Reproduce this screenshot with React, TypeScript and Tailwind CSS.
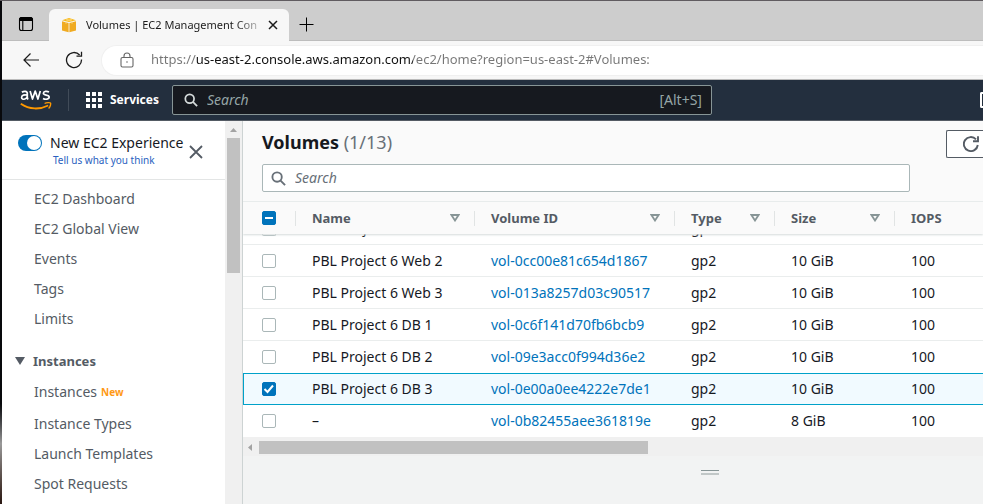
import React from "react";

type Volume = {
  name: string;
  id: string;
  type: string;
  size: string;
  iops: string;
  selected?: boolean;
};

const volumes: Volume[] = [
  { name: "PBL Project 6 Web 2", id: "vol-0cc00e81c654d1867", type: "gp2", size: "10 GiB", iops: "100" },
  { name: "PBL Project 6 Web 3", id: "vol-013a8257d03c90517", type: "gp2", size: "10 GiB", iops: "100" },
  { name: "PBL Project 6 DB 1", id: "vol-0c6f141d70fb6bcb9", type: "gp2", size: "10 GiB", iops: "100" },
  { name: "PBL Project 6 DB 2", id: "vol-09e3acc0f994d36e2", type: "gp2", size: "10 GiB", iops: "100" },
  { name: "PBL Project 6 DB 3", id: "vol-0e00a0ee4222e7de1", type: "gp2", size: "10 GiB", iops: "100", selected: true },
  { name: "–", id: "vol-0b82455aee361819e", type: "gp2", size: "8 GiB", iops: "100" },
];

function SearchIcon({ className }: { className: string }) {
  return (
    <svg viewBox="0 0 16 16" className={className} fill="none" stroke="currentColor" strokeWidth="2" aria-hidden="true">
      <circle cx="6.5" cy="6.5" r="5" />
      <path d="M10.2 10.2 15 15" />
    </svg>
  );
}

function BrowserTabs() {
  return (
    <div className="flex h-10 items-end border-b border-[#bdbdbd] bg-[#cdcdcd]">
      <button type="button" aria-label="Tab actions" className="flex h-8 w-[47px] items-center justify-center text-black">
        <svg viewBox="0 0 16 16" className="size-4" fill="none" stroke="currentColor" aria-hidden="true">
          <rect x="1.5" y="1.5" width="13" height="13" rx="2" strokeWidth="1.1" />
          <path d="M1.5 3.500a2 2 0 0 1 2-2h9a2 2 0 0 1 2 2v1h-13z" fill="currentColor" />
          <path d="M4.800 5v9.5" strokeWidth="1.1" />
        </svg>
      </button>
      <div className="-mb-px flex h-8 w-60 items-center rounded-t-md bg-[#f7f7f7] pr-1 pl-3">
        <svg viewBox="0 0 16 16" className="size-4 shrink-0" aria-hidden="true">
          <path d="M1 3.2 8 1l7 2.2L8 5z" fill="#f9b917" />
          <path d="M1 4.2 7.6 6v9.3L1 13.4z" fill="#f0ab22" />
          <path d="M15 4.2 8.4 6v9.3l6.6-1.9z" fill="#f0ab22" />
          <path d="M5 2.2 11 4.1v2.8M11 2.2 5 4.1v2.8" stroke="#fbdc8f" strokeWidth=".7" fill="none" />
        </svg>
        <span className="ml-[9px] flex-1 bg-linear-to-r from-[#1b1b1b] from-85% to-[#d0d0d0] bg-clip-text text-[11px] whitespace-nowrap text-transparent">
          Volumes | EC2 Management Con
        </span>
        <button type="button" aria-label="Close tab" className="flex h-6 w-6 shrink-0 items-center justify-center text-[#1b1b1b]">
          <svg viewBox="0 0 10 10" className="size-[10px]" stroke="currentColor" strokeWidth="1.5" aria-hidden="true">
            <path d="m1 1 8 8M9 1 1 9" />
          </svg>
        </button>
      </div>
      <button type="button" aria-label="New tab" className="flex h-8 w-[35px] items-center justify-center text-black">
        <svg viewBox="0 0 15 15" className="size-[15px]" stroke="currentColor" aria-hidden="true">
          <path d="M7.500 0.500v14M0.500 7.500h14" />
        </svg>
      </button>
    </div>
  );
}

function AddressBar() {
  return (
    <div className="flex h-[39px] items-center border-b border-[#bbbbbb] bg-[#f7f7f7] pl-5">
      <button type="button" aria-label="Back" className="text-[#1b1b1b]">
        <svg viewBox="0 0 18 18" className="size-[18px]" fill="none" stroke="currentColor" strokeWidth="1.2" aria-hidden="true">
          <path d="M17 9H2M8.500 2.500 2 9l6.500 6.500" />
        </svg>
      </button>
      <button type="button" aria-label="Refresh" className="ml-[25px] text-[#1b1b1b]">
        <svg viewBox="0 0 18 18" className="size-[18px]" fill="none" stroke="currentColor" strokeWidth="1.3" aria-hidden="true">
          <path d="M16.5 8.5A7.5 7.5 0 1 1 14.6 4" />
          <path d="M11.5 5.2h5V.8" />
        </svg>
      </button>
      <div className="ml-[18px] flex h-[31px] flex-1 items-center rounded-l-full border-y border-l border-[#f0f0f0] bg-white pl-[18px]">
        <svg viewBox="0 0 14 16" className="h-4 w-[14px] shrink-0" fill="none" stroke="#666" strokeWidth="1.1" aria-hidden="true">
          <rect x="1" y="5.5" width="12" height="9.5" rx="1.5" />
          <path d="M4 5.5V4a3 3 0 0 1 6 0v1.5" />
          <circle cx="7" cy="10" r=".8" fill="#666" stroke="none" />
        </svg>
        <input
          type="text"
          aria-label="Address"
          readOnly
          value="https://us-east-2.console.aws.amazon.com/ec2/home?region=us-east-2#Volumes:"
          className="ml-[17px] min-w-0 flex-1 bg-[linear-gradient(90deg,#767676_45px,#111_45px,#111_262px,#767676_262px)] bg-clip-text text-[13px] text-transparent outline-none"
        />
      </div>
    </div>
  );
}

function AwsLogo() {
  return (
    <svg viewBox="0 0 32 22" className="h-[22px] w-8" aria-label="AWS" role="img" fill="none">
      <g stroke="#fff" strokeWidth="1.7" strokeLinejoin="round">
        <path d="M1.9 3.3C3.6 2 7.3 1.6 7.3 4.6v3.3c0 1.2.2 1.8.7 2.5M7.3 6.2C4.5 5.5 1.6 6 1.6 8.4c0 2.8 4.8 2.4 5.7-.9" />
        <path d="m10.1 1.9 2.4 8.2 2.7-8 2.7 8 2.4-8.2" />
        <path d="M29 3c-1.900-1-5.600-.9-5.600 1.300 0 2.500 5.800 1 5.800 3.800 0 2.500-4 2.600-6.200 1.300" />
      </g>
      <path d="M.8 14.800c8.500 5.900 19 6 27.400 1.700" stroke="#f90" strokeWidth="1.800" />
      <path d="M24.600 14.500c2-1.100 5.400-1 5.900-.5s0 3.700-1.900 5.500" stroke="#f90" strokeWidth="1.400" />
    </svg>
  );
}

function AwsNav() {
  return (
    <header className="flex h-[41px] items-center border-b border-[#545b64] bg-[#232f3e] pl-[18px]">
      <a href="#home" aria-label="AWS home">
        <AwsLogo />
      </a>
      <div className="ml-4 h-[22px] w-px bg-[#414c59]" />
      <button type="button" className="ml-[17px] flex items-center text-xs font-bold text-white">
        <svg viewBox="0 0 16 16" className="mr-2 size-4" fill="currentColor" aria-hidden="true">
          {[0, 6, 12].map((y) =>
            [0, 6, 12].map((x) => <rect key={`${x}-${y}`} x={x} y={y} width="4" height="4" />)
          )}
        </svg>
        Services
      </button>
      <div className="ml-[13px] flex h-[30px] w-[540px] items-center rounded-xs border border-[#879596] bg-[#16191f] pr-[9px] pl-[11px]">
        <SearchIcon className="size-[14px] shrink-0 text-[#d5dbdb]" />
        <input
          type="text"
          aria-label="Search services"
          placeholder="Search"
          className="ml-[9px] min-w-0 flex-1 text-sm text-white outline-none placeholder:text-[#95a5a6] placeholder:italic"
        />
        <span className="text-sm text-[#95a5a6]">[Alt+S]</span>
      </div>
      <div className="ml-auto h-4 w-[3px] rounded-l-xs border-y-2 border-l-2 border-white" />
    </header>
  );
}

function SideLink({ children }: { children: React.ReactNode }) {
  return (
    <li className="flex h-[30px] items-center">
      <a href="#section" className="flex items-center">
        {children}
      </a>
    </li>
  );
}

function Sidebar() {
  return (
    <aside className="flex w-[240px] shrink-0 overflow-hidden bg-white">
      <div className="min-w-0 flex-1">
        <div className="flex h-[59px] items-center border-b border-[#e3e5e5] pl-4">
          <div>
            <label className="flex h-5 items-center text-sm whitespace-nowrap text-[#16191f]">
              <input
                type="checkbox"
                role="switch"
                defaultChecked
                className="mr-2 flex h-4 w-6 appearance-none items-center justify-end rounded-full bg-[#0073bb] pr-px before:size-[14px] before:rounded-full before:bg-white"
              />
              New EC2 Experience
            </label>
            <a href="#feedback" className="ml-[35px] block text-[10px] leading-[14px] text-[#2a5fc0]">
              Tell us what you think
            </a>
          </div>
          <button type="button" aria-label="Close navigation" className="mt-1 ml-[6px] text-[#545b64]">
            <svg viewBox="0 0 14 14" className="size-[14px]" stroke="currentColor" strokeWidth="1.800" aria-hidden="true">
              <path d="m1 1 12 12M13 1 1 13" />
            </svg>
          </button>
        </div>
        <nav className="pt-1 text-sm text-[#545b64]">
          <ul className="pl-8">
            <SideLink>EC2 Dashboard</SideLink>
            <SideLink>EC2 Global View</SideLink>
            <SideLink>Events</SideLink>
            <SideLink>Tags</SideLink>
            <SideLink>Limits</SideLink>
          </ul>
          <button type="button" className="mt-3 flex h-[30px] items-center pl-[13px] text-[13px] font-bold">
            <svg viewBox="0 0 10 8" className="mr-2 h-2 w-[10px]" fill="currentColor" aria-hidden="true">
              <path d="M0 0h10L5 8z" />
            </svg>
            Instances
          </button>
          <ul className="pt-px pl-8">
            <SideLink>
              Instances <span className="ml-1 text-[10px] font-bold text-[#ff9914]">New</span>
            </SideLink>
            <li className="h-[2px]" aria-hidden="true" />
            <SideLink>Instance Types</SideLink>
            <SideLink>Launch Templates</SideLink>
            <SideLink>Spot Requests</SideLink>
          </ul>
        </nav>
      </div>
      <div className="flex w-[17px] shrink-0 flex-col items-center bg-[#f0f0f0]" aria-hidden="true">
        <svg viewBox="0 0 7 4" className="mt-[7px] h-1 w-[7px]" fill="#a3a3a3">
          <path d="M3.500 0 7 4H0z" />
        </svg>
        <div className="mt-[6px] h-[135px] w-[13px] bg-[#c1c1c1]" />
      </div>
    </aside>
  );
}

function Check({ label, state = "off" }: { label: string; state?: "off" | "on" | "mixed" }) {
  return (
    <span className="relative block size-[14px]">
      <input
        type="checkbox"
        aria-label={label}
        defaultChecked={state !== "off"}
        className="block size-[14px] appearance-none rounded-xs border border-[#aab7b8] bg-white checked:border-[#0073bb] checked:bg-[#0073bb]"
      />
      {state !== "off" && (
        <svg viewBox="0 0 14 14" className="pointer-events-none absolute inset-0 size-[14px]" fill="none" stroke="#fff" strokeWidth="2" aria-hidden="true">
          <path d={state === "on" ? "m2.500 7 3 3 5.500-6.500" : "M3 7h8"} />
        </svg>
      )}
    </span>
  );
}

function HeaderCell({ title, filter = true }: { title: string; filter?: boolean }) {
  return (
    <th scope="col" className="p-0 text-left font-bold">
      <div className="flex h-[15px] items-center justify-between border-l border-[#e1e4e4] pr-[14px] pl-4">
        {title}
        {filter && (
          <svg viewBox="0 0 10 8" className="h-2 w-[10px]" fill="none" stroke="#879596" strokeWidth="1.800" aria-hidden="true">
            <path d="M1.400 1h7.200L5 6.500z" />
          </svg>
        )}
      </div>
    </th>
  );
}

function VolumeTable() {
  const rows = volumes.map((v, i) => {
    const beforeSelected = volumes[i + 1]?.selected;
    const last = i === volumes.length - 1;
    const line = v.selected
      ? "border-y border-[#00a1c9]"
      : beforeSelected || last
        ? ""
        : "border-b border-[#eaeded]";
    const cell = `h-8 p-0 pl-[17px] ${line}`;
    return (
      <tr key={v.id} className={v.selected ? "bg-[#f1faff]" : "bg-white"}>
        <td className={v.selected ? "h-8 border-y border-l border-[#00a1c9] p-0 pl-[18px]" : `h-8 p-0 pl-[19px] ${line}`}>
          <Check label={`Select ${v.name}`} state={v.selected ? "on" : "off"} />
        </td>
        <td className={cell}>{v.name}</td>
        <td className={cell}>
          <a href="#volume" className="text-[#0073bb]">
            {v.id}
          </a>
        </td>
        <td className={cell}>{v.type}</td>
        <td className={cell}>{v.size}</td>
        <td className={cell}>{v.iops}</td>
      </tr>
    );
  });

  const clipped = "flex h-[10px] items-end overflow-hidden pb-[6px] pl-[17px] leading-5";

  return (
    <table className="w-full table-fixed border-separate border-spacing-0 text-sm whitespace-nowrap text-[#16191f]">
      <colgroup>
        <col className="w-[52px]" />
        <col className="w-[179px]" />
        <col className="w-[200px]" />
        <col className="w-[100px]" />
        <col className="w-[120px]" />
        <col />
      </colgroup>
      <thead className="bg-[#fafafa] text-[13px] text-[#545b64]">
        <tr className="relative h-8 bg-[#fafafa] shadow-[0_1px_2px_#d5dbdb]">
          <th scope="col" className="p-0 pl-[19px]">
            <Check label="Select all volumes" state="mixed" />
          </th>
          <HeaderCell title="Name" />
          <HeaderCell title="Volume ID" />
          <HeaderCell title="Type" />
          <HeaderCell title="Size" />
          <HeaderCell title="IOPS" filter={false} />
        </tr>
      </thead>
      <tbody>
        <tr className="bg-white">
          <td className="border-b border-[#eaeded] p-0">
            <div className="flex h-[10px] items-start overflow-hidden pl-[19px]">
              <div className="h-[2px] w-[14px] rounded-b-xs border-x border-b border-[#aab7b8]" />
            </div>
          </td>
          <td className="border-b border-[#eaeded] p-0">
            <div className={clipped}>PBL Project 6 Web 1</div>
          </td>
          <td className="border-b border-[#eaeded] p-0" />
          <td className="border-b border-[#eaeded] p-0">
            <div className={clipped}>gp2</div>
          </td>
          <td className="border-b border-[#eaeded] p-0" />
          <td className="border-b border-[#eaeded] p-0" />
        </tr>
        {rows}
      </tbody>
    </table>
  );
}

function Volumes() {
  return (
    <main className="min-w-0 flex-1 overflow-hidden border-l border-[#cdd3d3] bg-[#f2f3f3]">
      <section className="border-b border-[#eaeded] bg-[#fafafa] pl-[19px]">
        <div className="flex h-[43px] items-center justify-between">
          <h1 className="pb-[2px] text-lg font-bold text-[#16191f]">
            Volumes <span className="font-normal text-[#687078]">(1/13)</span>
          </h1>
          <button
            type="button"
            aria-label="Refresh volumes"
            className="mt-[3px] flex h-7 w-[37px] items-center rounded-l-xs border-y border-l border-[#545b64] bg-white pl-4 text-[#545b64]"
          >
            <svg viewBox="0 0 16 16" className="size-4" fill="none" stroke="currentColor" strokeWidth="1.900" aria-hidden="true">
              <path d="M14.800 9A7 7 0 1 1 13 3.300" />
              <path d="M10 5.200h5V.3" />
            </svg>
          </button>
        </div>
        <div className="mr-[73px] mb-[9px] flex h-7 items-center rounded-xs border border-[#aab7b8] bg-white pl-2">
          <SearchIcon className="size-[15px] shrink-0 text-[#687078]" />
          <input
            type="text"
            aria-label="Search volumes"
            placeholder="Search"
            className="ml-[9px] min-w-0 flex-1 text-sm outline-none placeholder:text-[#687078] placeholder:italic"
          />
        </div>
      </section>
      <VolumeTable />
      <div className="flex h-[19px] items-center bg-[#f0f0f0] pt-px pl-[5px]" aria-hidden="true">
        <svg viewBox="0 0 4 7" className="h-[7px] w-1" fill="#a3a3a3">
          <path d="M4 0v7L0 3.500z" />
        </svg>
        <div className="ml-[7px] h-[13px] w-[389px] bg-[#c1c1c1]" />
      </div>
      <div className="pt-[14px] pl-[458px]">
        <button type="button" aria-label="Resize panel" className="block h-[5px] w-[18px] border-t border-b-2 border-t-[#879596] border-b-[#c1c7c7]" />
      </div>
    </main>
  );
}

export default function App() {
  return (
    <div className="flex h-screen flex-col overflow-hidden border-t border-[#605c60] bg-white font-['Noto_Sans','Open_Sans',sans-serif]">
      <div className="flex min-h-0 flex-1">
        <div className="w-[2px] shrink-0 bg-linear-to-b from-[#08090c] from-80% via-[#9a9a9a] via-88% to-[#2a1812]" />
        <div className="flex min-w-0 flex-1 flex-col">
          <BrowserTabs />
          <AddressBar />
          <AwsNav />
          <div className="flex min-h-0 flex-1">
            <Sidebar />
            <Volumes />
          </div>
        </div>
      </div>
    </div>
  );
}
